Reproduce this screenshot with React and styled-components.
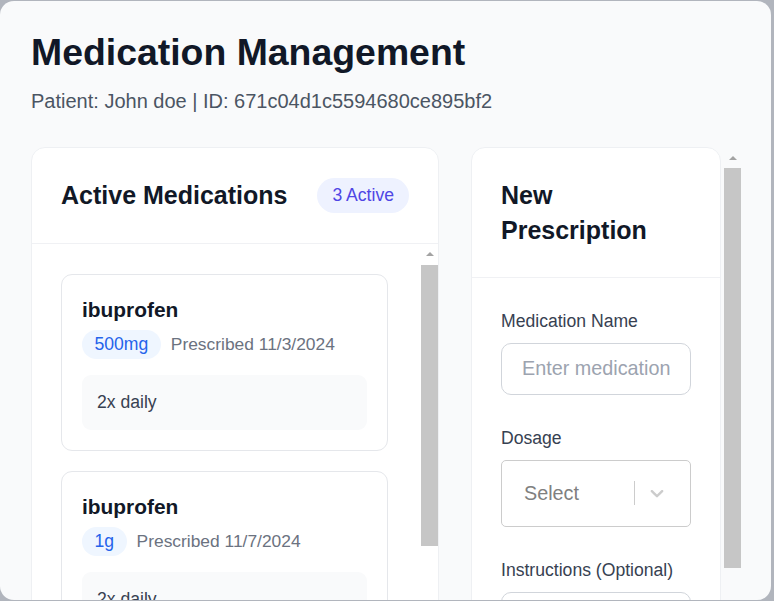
import React from "react";
import styled, { createGlobalStyle } from "styled-components";

const medications = [
  { name: "ibuprofen", dosage: "500mg", date: "11/3/2024", instructions: "2x daily" },
  { name: "ibuprofen", dosage: "1g", date: "11/7/2024", instructions: "2x daily" },
  { name: "ibuprofen", dosage: "250mg", date: "11/9/2024", instructions: "2x daily" },
];

const ScrollBar = ({ thumb }) => (
  <ScrollTrack>
    <ScrollButton>
      <ArrowUp />
    </ScrollButton>
    <ScrollThumb $height={thumb} />
  </ScrollTrack>
);

const App = () => {
  return (
    <>
      <GlobalStyle />
      <Panel>
        <Title>Medication Management</Title>
        <Subtitle>Patient: John doe | ID: 671c04d1c5594680ce895bf2</Subtitle>

        <Columns>
          <Card>
            <CardHeader>
              <CardTitle>Active Medications</CardTitle>
              <CountBadge>{medications.length} Active</CountBadge>
            </CardHeader>
            <CardBody>
              <MedList>
                {medications.map((med, i) => (
                  <MedItem key={i}>
                    <MedName>{med.name}</MedName>
                    <MetaRow>
                      <DosePill>{med.dosage}</DosePill>
                      <MetaText>Prescribed {med.date}</MetaText>
                    </MetaRow>
                    <InstructionBox>{med.instructions}</InstructionBox>
                  </MedItem>
                ))}
              </MedList>
              <ScrollBar thumb={281} />
            </CardBody>
          </Card>

          <SideColumn>
            <SideScroller>
              <FormCard>
                <CardHeader>
                  <CardTitle>New Prescription</CardTitle>
                </CardHeader>
                <Form onSubmit={(e) => e.preventDefault()}>
                  <Field>
                    <Label>Medication Name</Label>
                    <Input type="text" placeholder="Enter medication name" />
                  </Field>
                  <Field>
                    <Label>Dosage</Label>
                    <SelectControl>
                      <SelectValue>Select</SelectValue>
                      <SelectSeparator />
                      <SelectIndicator>
                        <svg width="22" height="22" viewBox="0 0 20 20" fill="#cccccc">
                          <path d="M4.516 7.548c0.436-0.446 1.043-0.481 1.576 0l3.908 3.747 3.908-3.747c0.533-0.481 1.141-0.446 1.574 0 0.436 0.445 0.408 1.197 0 1.615-0.406 0.418-4.695 4.502-4.695 4.502-0.217 0.223-0.502 0.335-0.787 0.335s-0.57-0.112-0.789-0.335c0 0-4.287-4.084-4.695-4.502s-0.436-1.17 0-1.615z" />
                        </svg>
                      </SelectIndicator>
                    </SelectControl>
                  </Field>
                  <Field>
                    <Label>Instructions (Optional)</Label>
                    <Textarea placeholder="e.g. Take with food" />
                  </Field>
                  <SubmitButton type="submit">Add Prescription</SubmitButton>
                </Form>
              </FormCard>
            </SideScroller>
            <ScrollBar thumb={400} />
          </SideColumn>
        </Columns>
      </Panel>
    </>
  );
};

export default App;

const GlobalStyle = createGlobalStyle`
  html, body {
    margin: 0;
    padding: 0;
    background: #b1b5bd;
  }

  body {
    font-family: "Liberation Sans", Arial, sans-serif;
    overflow: hidden;
  }

  * {
    box-sizing: border-box;
  }
`;

const Panel = styled.div`
  margin-top: 1px;
  width: 771px;
  height: 599px;
  border-radius: 14px;
  background: #f9fafb;
  overflow: hidden;
  padding: 30px 30px 0 31px;
`;

const Title = styled.h1`
  margin: 0;
  font-size: 37.4px;
  line-height: 43px;
  font-weight: 700;
  color: #111827;
`;

const Subtitle = styled.p`
  margin: 12px 0 0;
  font-size: 20px;
  line-height: 30px;
  color: #4b5563;
`;

const Columns = styled.div`
  display: flex;
  gap: 32px;
  height: 538px;
  margin-top: 31px;
`;

const Card = styled.div`
  width: 408px;
  height: 100%;
  display: flex;
  flex-direction: column;
  background: #ffffff;
  border: 1px solid #eef0f3;
  border-radius: 14px;
  overflow: hidden;
`;

const CardHeader = styled.div`
  display: flex;
  align-items: center;
  justify-content: space-between;
  padding: 30px 29px 29.5px 29px;
  border-bottom: 1px solid #f0f1f4;
`;

const CardTitle = styled.h2`
  margin: 0;
  font-size: 25px;
  line-height: 34.5px;
  font-weight: 700;
  color: #111827;
`;

const CountBadge = styled.span`
  display: inline-flex;
  align-items: center;
  height: 35px;
  padding: 0 15px;
  border-radius: 18px;
  background: #eef2ff;
  color: #4f46e5;
  font-size: 17.6px;
`;

const CardBody = styled.div`
  flex: 1;
  min-height: 0;
  display: flex;
`;

const MedList = styled.div`
  flex: 1;
  overflow: hidden;
  padding: 30px 33px 30px 29px;
  display: flex;
  flex-direction: column;
  gap: 20px;
`;

/* drawn classic scrollbar: arrow button + thumb */
const ScrollTrack = styled.div`
  width: 17px;
  flex-shrink: 0;
  display: flex;
  flex-direction: column;
`;

const ScrollButton = styled.div`
  height: 21px;
  display: flex;
  justify-content: center;
  padding-top: 8.5px;
`;

const ArrowUp = styled.span`
  width: 0;
  height: 0;
  border-left: 4.5px solid transparent;
  border-right: 4.5px solid transparent;
  border-bottom: 4.5px solid #a3a3a3;
`;

const ScrollThumb = styled.div`
  height: ${(p) => p.$height}px;
  background: #c6c6c6;
`;

const MedItem = styled.div`
  flex-shrink: 0;
  border: 1px solid #e5e7eb;
  border-radius: 11px;
  padding: 20px;
`;

const MedName = styled.h3`
  margin: 0 0 6px;
  font-size: 20.9px;
  line-height: 29px;
  font-weight: 700;
  color: #111827;
`;

const MetaRow = styled.div`
  display: flex;
  align-items: center;
  gap: 10px;
  margin-bottom: 16px;
`;

const DosePill = styled.span`
  display: inline-flex;
  align-items: center;
  height: 29px;
  padding: 0 12.5px;
  border-radius: 15px;
  background: #eff6ff;
  color: #2563eb;
  font-size: 17.6px;
`;

const MetaText = styled.span`
  font-size: 17.4px;
  color: #6b7280;
`;

const InstructionBox = styled.div`
  background: #f9fafb;
  border-radius: 9px;
  padding: 15px;
  font-size: 17.6px;
  line-height: 25px;
  color: #374151;
`;

const SideColumn = styled.div`
  width: 270px;
  height: 100%;
  display: flex;
  gap: 3px;
`;

const SideScroller = styled.div`
  width: 250px;
  height: 100%;
  overflow: hidden;
`;

const FormCard = styled.div`
  width: 250px;
  background: #ffffff;
  border: 1px solid #eef0f3;
  border-radius: 14px;
`;

const Form = styled.form`
  display: flex;
  flex-direction: column;
  gap: 30px;
  padding: 30px 29px 30px 29px;
`;

const Field = styled.div`
  display: flex;
  flex-direction: column;
`;

const Label = styled.label`
  font-size: 17.6px;
  line-height: 26px;
  margin-bottom: 9px;
  color: #374151;
`;

const Input = styled.input`
  width: 100%;
  height: 52px;
  padding: 0 20px;
  border: 1px solid #d1d5db;
  border-radius: 10px;
  font-family: inherit;
  font-size: 19.8px;
  color: #111827;
  background: #ffffff;
  outline: none;

  &::placeholder {
    color: #9ca3af;
  }
`;

const SelectControl = styled.div`
  display: flex;
  align-items: center;
  height: 67px;
  border: 1px solid #cccccc;
  border-radius: 5px;
  background: #ffffff;
`;

const SelectValue = styled.span`
  flex: 1;
  padding-left: 22px;
  font-size: 19.8px;
  color: #808080;
`;

const SelectSeparator = styled.span`
  width: 1px;
  height: 24px;
  background: #cccccc;
`;

const SelectIndicator = styled.span`
  display: flex;
  padding: 0 22px 0 11px;
`;

const Textarea = styled.textarea`
  width: 100%;
  height: 110px;
  padding: 14px 20px;
  border: 1px solid #d1d5db;
  border-radius: 10px;
  font-family: inherit;
  font-size: 19.8px;
  resize: vertical;
  outline: none;

  &::placeholder {
    color: #9ca3af;
  }
`;

const SubmitButton = styled.button`
  height: 52px;
  border: none;
  border-radius: 10px;
  background: #4f46e5;
  color: #ffffff;
  font-family: inherit;
  font-size: 17.6px;
  font-weight: 700;
  cursor: pointer;
`;
